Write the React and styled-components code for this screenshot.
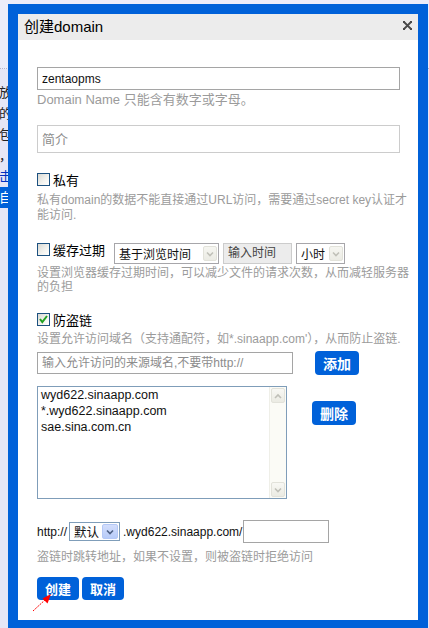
import React from "react";
import styled, { createGlobalStyle } from "styled-components";

const FONT = `"Liberation Sans", "Noto Sans CJK SC", sans-serif`;

const GlobalStyle = createGlobalStyle`
  html, body { margin: 0; padding: 0; background: #e6e6f6; overflow: hidden; }
  body { font-family: ${FONT}; }
`;

const Page = styled.div`
  position: relative;
  width: 429px;
  height: 628px;
  overflow: hidden;
  background: #e6e6f6;
`;

const BackTop = styled.div`
  height: 68px;
  background: #ececf9;
  border-bottom: 1px dotted #b4b4cc;
`;

const BackList = styled.div`
  width: 12px;
  overflow: hidden;
  direction: rtl;
  white-space: nowrap;
  padding-top: 13px;
  font-size: 13px;
  line-height: 21px;
`;

const BackLine = styled.div`
  color: ${(p) => (p.$active ? "#fff" : p.$link ? "#0030c0" : "#222")};
  background: ${(p) => (p.$active ? "#0061d9" : "transparent")};
`;

const Modal = styled.div`
  position: absolute;
  top: 4px;
  left: 8px;
  width: 420px;
  box-sizing: border-box;
  padding: 10px;
  background: #0061d9;
`;

const Panel = styled.div`
  background: #fff;
`;

const Header = styled.div`
  height: 26px;
  background: #ececec;
  display: flex;
  align-items: center;
  justify-content: space-between;
  padding: 0 6px;
`;

const Title = styled.h1`
  margin: 0;
  font-size: 15px;
  font-weight: normal;
  color: #000;
  line-height: 26px;
`;

const CloseBtn = styled.button`
  border: 0;
  background: none;
  padding: 0;
  width: 9px;
  height: 9px;
  margin-bottom: 4px;
  display: flex;
  cursor: pointer;
`;

const Body = styled.div`
  padding: 27px 7px 20px 19px;
`;

const TextInput = styled.input`
  box-sizing: border-box;
  display: block;
  width: ${(p) => p.$w}px;
  height: ${(p) => p.$h}px;
  margin-top: ${(p) => p.$mt || 0}px;
  margin-left: ${(p) => p.$ml || 0}px;
  border: 1px solid ${(p) => p.$border || "#a5a5a5"};
  background: ${(p) => p.$bg || "#fff"};
  padding: 0 4px;
  font: ${(p) => p.$fs || 12}px ${FONT};
  line-height: ${(p) => p.$h - 2}px;
  color: ${(p) => p.$color || "#111"};
  outline: none;
  flex: none;
  &::placeholder {
    color: #8c8c8c;
  }
`;

const Hint = styled.div`
  margin-top: ${(p) => p.$mt || 0}px;
  font-size: ${(p) => p.$fs || 12}px;
  line-height: ${(p) => p.$lh || 15}px;
  color: #9b9b9b;
  white-space: nowrap;
`;

const Row = styled.div`
  display: flex;
  align-items: ${(p) => p.$align || "flex-start"};
  margin-top: ${(p) => p.$mt || 0}px;
  height: ${(p) => (p.$h ? `${p.$h}px` : "auto")};
`;

const CheckGroup = styled.label`
  display: flex;
  align-items: flex-start;
  width: ${(p) => (p.$w ? `${p.$w}px` : "auto")};
  flex: none;
`;

const Box = styled.span`
  box-sizing: border-box;
  width: 13px;
  height: 13px;
  border: 1px solid #1c5180;
  background: linear-gradient(135deg, #d8d8d2 0%, #f4f4f0 60%, #ffffff 100%);
  display: inline-flex;
  align-items: center;
  justify-content: center;
  flex: none;
`;

const CheckText = styled.span`
  margin-left: 3px;
  font-size: 13px;
  line-height: 16px;
  color: #000;
`;

const SelectBox = styled.div`
  box-sizing: border-box;
  width: ${(p) => p.$w}px;
  height: ${(p) => p.$h}px;
  margin-left: ${(p) => p.$ml || 0}px;
  border: 1px solid ${(p) => p.$border || "#a7a6aa"};
  display: flex;
  align-items: center;
  justify-content: space-between;
  padding: 0 1px 0 4px;
  font-size: ${(p) => p.$fs || 12}px;
  color: #111;
  background: #fff;
  flex: none;
`;

const ArrowBox = styled.span`
  box-sizing: border-box;
  width: ${(p) => p.$w || 14}px;
  height: 15px;
  display: flex;
  align-items: center;
  justify-content: center;
  border: 1px solid ${(p) => (p.$blue ? "#b4c8f6" : "#e2e2da")};
  border-radius: 2px;
  background: ${(p) =>
    p.$blue ? "linear-gradient(#d3defc, #b7cbf8)" : "linear-gradient(#f6f6f1, #ebebe4)"};
`;

const BlueButton = styled.button`
  box-sizing: border-box;
  width: ${(p) => p.$w}px;
  height: ${(p) => p.$h}px;
  margin-left: ${(p) => p.$ml || 0}px;
  margin-top: ${(p) => p.$mt || 0}px;
  border: 0;
  border-radius: 4px;
  background: #0061d9;
  color: #fff;
  font: bold ${(p) => p.$fs || 13}px ${FONT};
  padding: 0;
  flex: none;
  cursor: pointer;
`;

const ListBox = styled.div`
  box-sizing: border-box;
  width: 250px;
  height: 113px;
  border: 1px solid #7f9db9;
  display: flex;
  background: #fff;
  flex: none;
`;

const ListItems = styled.div`
  flex: 1;
  padding: 0 3px;
  font-size: 12.5px;
  line-height: 16px;
  color: #111;
`;

const ScrollBar = styled.div`
  box-sizing: border-box;
  width: 17px;
  background: #fbfbf6;
  border-left: 1px solid #efefe8;
  display: flex;
  flex-direction: column;
  justify-content: space-between;
  padding: 1px;
`;

const ScrollArrow = styled.div`
  height: 15px;
  box-sizing: border-box;
  border: 1px solid #e2e2da;
  border-radius: 2px;
  background: linear-gradient(#f8f8f4, #ebebe3);
  display: flex;
  align-items: center;
  justify-content: center;
`;

const InlineText = styled.span`
  font-size: 12px;
  color: #111;
  margin-left: ${(p) => p.$ml || 0}px;
  white-space: nowrap;
`;

const ButtonRow = styled.div`
  position: relative;
  display: flex;
  gap: 3px;
  margin-top: 12px;
`;

const Pointer = styled.svg`
  position: absolute;
  left: -6px;
  top: 14px;
  width: 24px;
  height: 24px;
`;

const Chevron = ({ up, color = "#c0c0b8" }) => (
  <svg width="8" height="6" viewBox="0 0 8 6">
    <polyline
      points={up ? "1,5 4,2 7,5" : "1,1.5 4,4.5 7,1.5"}
      fill="none"
      stroke={color}
      strokeWidth="1.6"
    />
  </svg>
);

const Check = ({ checked }) => (
  <Box>
    {checked && (
      <svg width="11" height="11" viewBox="0 0 11 11">
        <polyline points="2,5 4.3,8 9,2" fill="none" stroke="#21a121" strokeWidth="2" />
      </svg>
    )}
  </Box>
);

export default function App() {
  return (
    <Page>
      <GlobalStyle />
      <BackTop />
      <BackList>
        <BackLine>文字放</BackLine>
        <BackLine>的</BackLine>
        <BackLine>包</BackLine>
        <BackLine>，</BackLine>
        <BackLine $link>击</BackLine>
        <BackLine $active>自</BackLine>
      </BackList>

      <Modal>
        <Panel>
          <Header>
            <Title>创建domain</Title>
            <CloseBtn aria-label="关闭">
              <svg width="9" height="9" viewBox="0 0 9 9">
                <path d="M1 1 L8 8 M8 1 L1 8" stroke="#4a4a4a" strokeWidth="1.8" />
                <rect x="0" y="0" width="2" height="2" fill="#4a4a4a" />
                <rect x="7" y="0" width="2" height="2" fill="#4a4a4a" />
                <rect x="0" y="7" width="2" height="2" fill="#4a4a4a" />
                <rect x="7" y="7" width="2" height="2" fill="#4a4a4a" />
              </svg>
            </CloseBtn>
          </Header>

          <Body>
            <TextInput $w={363} $h={23} defaultValue="zentaopms" />
            <Hint $mt={2} $fs={13} $lh={16}>
              Domain Name 只能含有数字或字母。
            </Hint>

            <TextInput $w={363} $h={28} $mt={17} $border="#cccccc" $fs={13} placeholder="简介" />

            <Row $mt={20}>
              <CheckGroup>
                <Check />
                <CheckText>私有</CheckText>
              </CheckGroup>
            </Row>
            <Hint $mt={4}>
              私有domain的数据不能直接通过URL访问，需要通过secret key认证才
              <br />
              能访问.
            </Hint>

            <Row $mt={20}>
              <CheckGroup $w={77}>
                <Check />
                <CheckText>缓存过期</CheckText>
              </CheckGroup>
              <SelectBox $w={105} $h={21}>
                <span>基于浏览时间</span>
                <ArrowBox>
                  <Chevron />
                </ArrowBox>
              </SelectBox>
              <TextInput
                as="div"
                $w={69}
                $h={21}
                $ml={4}
                $bg="#ececec"
                $border="#cccccc"
                $color="#444"
              >
                输入时间
              </TextInput>
              <SelectBox $w={49} $h={21} $ml={4}>
                <span>小时</span>
                <ArrowBox>
                  <Chevron />
                </ArrowBox>
              </SelectBox>
            </Row>
            <Hint $mt={2} $lh={14}>
              设置浏览器缓存过期时间，可以减少文件的请求次数，从而减轻服务器
              <br />
              的负担
            </Hint>

            <Row $mt={19}>
              <CheckGroup>
                <Check checked />
                <CheckText>防盗链</CheckText>
              </CheckGroup>
            </Row>
            <Hint $mt={3}>设置允许访问域名（支持通配符，如*.sinaapp.com'），从而防止盗链.</Hint>

            <Row $mt={4} $align="center">
              <TextInput $w={256} $h={22} placeholder="输入允许访问的来源域名,不要带http://" />
              <BlueButton $w={44} $h={24} $ml={22} $fs={14}>
                添加
              </BlueButton>
            </Row>

            <Row $mt={11}>
              <ListBox>
                <ListItems>
                  <div>wyd622.sinaapp.com</div>
                  <div>*.wyd622.sinaapp.com</div>
                  <div>sae.sina.com.cn</div>
                </ListItems>
                <ScrollBar>
                  <ScrollArrow>
                    <Chevron up />
                  </ScrollArrow>
                  <ScrollArrow>
                    <Chevron />
                  </ScrollArrow>
                </ScrollBar>
              </ListBox>
              <BlueButton $w={44} $h={24} $ml={25} $mt={15} $fs={14}>
                删除
              </BlueButton>
            </Row>

            <Row $mt={21} $align="center" $h={23}>
              <InlineText>http://</InlineText>
              <SelectBox $w={51} $h={19} $ml={2} $border="#7f9db9" $fs={12.5}>
                <span>默认</span>
                <ArrowBox $blue $w={16}>
                  <Chevron color="#4d6185" />
                </ArrowBox>
              </SelectBox>
              <InlineText $ml={3}>.wyd622.sinaapp.com/</InlineText>
              <TextInput $w={86} $h={23} $ml={1} />
            </Row>
            <Hint $mt={7}>盗链时跳转地址，如果不设置，则被盗链时拒绝访问</Hint>

            <ButtonRow>
              <BlueButton $w={42} $h={23}>
                创建
              </BlueButton>
              <BlueButton $w={42} $h={23}>
                取消
              </BlueButton>
              <Pointer viewBox="0 0 24 24">
                <path d="M2 20 L15 8" stroke="#f00" strokeWidth="1" strokeDasharray="2 1" fill="none" />
                <polygon points="20,3 11.5,7.5 16.5,12.5" fill="#f00" />
              </Pointer>
            </ButtonRow>
          </Body>
        </Panel>
      </Modal>
    </Page>
  );
}
